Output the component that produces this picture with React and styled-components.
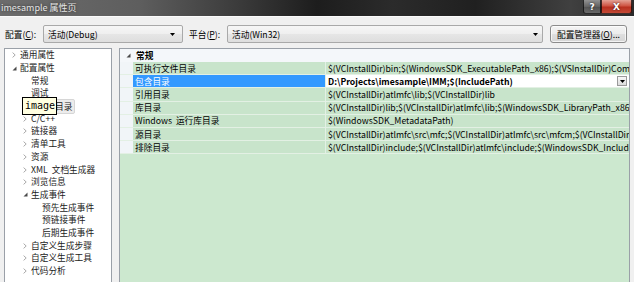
import React from 'react';
import styled, { createGlobalStyle } from 'styled-components';

const Global = createGlobalStyle`
  html, body { margin: 0; padding: 0; background: #f0f0f0; overflow: hidden; }
  #root { width: 634px; height: 282px; }
  * { box-sizing: border-box; }
`;

const UI = `"Noto Sans CJK SC", "Noto Sans", sans-serif`;

const Window = styled.div`
  position: relative;
  width: 634px;
  height: 282px;
  overflow: hidden;
  display: flex;
  flex-direction: column;
  background: #f0f0f0;
  font-family: ${UI};
  font-size: 8.7px;
  color: #000;
`;

const TitleBar = styled.div`
  height: 16px;
  flex: none;
  display: flex;
  align-items: flex-start;
  justify-content: space-between;
  background: linear-gradient(90deg, #6c6c6c 0%, #5e5e5e 22%, #3a3a3a 38%, #1d1d1d 50%, #2b2b2b 62%, #202020 75%, #404040 90%, #2a2a2a 100%);
`;

const TitleText = styled.div`
  padding-left: 1px;
  line-height: 15px;
  font-size: 9px;
  color: #e6e6e6;
  text-shadow: 0 0 3px rgba(0, 0, 0, 0.6);
`;

const CaptionButtons = styled.div`
  display: flex;
  margin-right: 2px;
`;

const CaptionButton = styled.div`
  width: ${(p) => p.$w}px;
  height: 14px;
  display: flex;
  align-items: center;
  justify-content: center;
  color: #fff;
  font-family: "DejaVu Sans", sans-serif;
  font-weight: bold;
  font-size: 9px;
  border: 1px solid rgba(0, 0, 0, 0.7);
  border-top: none;
  border-radius: ${(p) => (p.$close ? '0 0 3px 0' : '0 0 0 3px')};
  background: ${(p) =>
    p.$close
      ? 'linear-gradient(#e3a295 0%, #cf5544 45%, #b8301f 55%, #c44a36 100%)'
      : 'linear-gradient(rgba(255,255,255,0.45) 0%, rgba(255,255,255,0.22) 50%, rgba(255,255,255,0.12) 51%, rgba(255,255,255,0.25) 100%)'};
  text-shadow: 0 0 2px rgba(0, 0, 0, 0.8);
`;

const Body = styled.div`
  flex: 1;
  min-height: 0;
  display: flex;
  flex-direction: column;
  padding: 8px 4px 0 4px;
  border-top: 1px solid #fbfbfb;
`;

const TopRow = styled.div`
  height: 18px;
  flex: none;
  display: flex;
  align-items: center;
`;

const FieldLabel = styled.div`
  width: ${(p) => p.$w}px;
  margin-left: ${(p) => p.$ml || 0}px;
  white-space: nowrap;
`;

const Select = styled.div`
  width: ${(p) => p.$w}px;
  height: 18px;
  display: flex;
  align-items: center;
  padding: 0 ${(p) => p.$pr}px 0 4px;
  border: 1px solid #a9a9a9;
  border-radius: 2px;
  background: linear-gradient(#f6f6f6 0%, #efefef 50%, #e6e6e6 51%, #dedede 100%);
`;

const SelectText = styled.div`
  flex: 1;
  white-space: nowrap;
  overflow: hidden;
`;

const Caret = styled.svg`
  flex: none;
  width: 5px;
  height: 3px;
`;

const PushButton = styled.div`
  width: 77px;
  height: 18px;
  margin-left: 7px;
  display: flex;
  align-items: center;
  justify-content: center;
  white-space: nowrap;
  border: 1px solid #8c8c8c;
  border-radius: 3px;
  background: linear-gradient(#f4f4f4 0%, #ececec 50%, #dfdfdf 51%, #d5d5d5 100%);
  box-shadow: inset 0 0 0 1px rgba(255, 255, 255, 0.7);
`;

const Main = styled.div`
  flex: 1;
  min-height: 0;
  margin-top: 5px;
  display: flex;
  gap: 7px;
`;

const TreePanel = styled.div`
  width: 108px;
  flex: none;
  border: 1px solid #9aa0a8;
  border-bottom: none;
  background: #fff;
  overflow: hidden;
`;

const TreeRow = styled.div`
  height: 12.7px;
  display: flex;
  align-items: center;
  padding-left: ${(p) => 7 + p.$level * 11}px;
  white-space: nowrap;
  word-spacing: 2px;
  color: #1a1a1a;
`;

const ArrowSlot = styled.div`
  width: 8px;
  flex: none;
  display: flex;
  align-items: center;
`;

const TreeText = styled.span`
  line-height: 12px;
`;

const Selected = styled.span`
  margin-left: -3px;
  padding: 1px 2px;
  border: 1px solid #d6d6d6;
  border-radius: 2px;
  background: #ececec;
  line-height: 11px;
`;

const Tooltip = styled.div`
  position: absolute;
  left: 22px;
  top: 97px;
  width: 35px;
  height: 18px;
  border: 1px solid #000;
  background: #ffffe1;
  font-family: "DejaVu Sans Mono", monospace;
  font-size: 10px;
  line-height: 16px;
  padding-left: 2px;
  color: #000;
`;

const GridPanel = styled.div`
  flex: 1;
  min-width: 0;
  display: flex;
  flex-direction: column;
  border: 1px solid #9aa0a8;
  border-bottom: none;
  background: #cce8cf;
  overflow: hidden;
`;

const CategoryRow = styled.div`
  height: 13px;
  flex: none;
  display: flex;
  align-items: center;
  padding-left: 6px;
  background: #f4f7fa;
  font-weight: bold;
`;

const CategoryText = styled.span`
  margin-left: 5px;
`;

const PropRow = styled.div`
  height: 13.2px;
  flex: none;
  display: flex;
  border-bottom: 1px solid #e3f0e4;
`;

const Gutter = styled.div`
  width: 13px;
  flex: none;
  background: #f1f5f8;
`;

const NameCell = styled.div`
  width: 193px;
  flex: none;
  padding-left: 2px;
  display: flex;
  align-items: center;
  white-space: nowrap;
  word-spacing: 2px;
  border-right: 1px solid #e3f0e4;
  background: ${(p) => (p.$sel ? '#3399ff' : '#c8e4cb')};
  color: ${(p) => (p.$sel ? '#fff' : '#000')};
`;

const ValueCell = styled.div`
  flex: 1;
  min-width: 0;
  display: flex;
  align-items: center;
  padding-left: 2px;
  padding-right: ${(p) => (p.$sel ? 2 : 0)}px;
  background: ${(p) => (p.$sel ? '#fff' : '#c8e4cb')};
  font-weight: ${(p) => (p.$sel ? 'bold' : 'normal')};
`;

const ValueText = styled.div`
  flex: 1;
  min-width: 0;
  white-space: nowrap;
  overflow: hidden;
`;

const DropButton = styled.div`
  width: 10px;
  height: 10px;
  flex: none;
  display: flex;
  align-items: center;
  justify-content: center;
  border: 1px solid #9a9a9a;
  background: linear-gradient(#f8f8f8, #dcdcdc);
`;

const Chevron = () => (
  <svg width="4" height="6" viewBox="0 0 4 6">
    <polyline points="0.6,0.6 3.2,3 0.6,5.4" fill="none" stroke="#a9a9a9" strokeWidth="1" />
  </svg>
);

const Expanded = () => (
  <svg width="5" height="5" viewBox="0 0 5 5">
    <polygon points="4.5,0.5 4.5,4.5 0.5,4.5" fill="#4a4a4a" />
  </svg>
);

const CaretIcon = () => (
  <Caret viewBox="0 0 5 3">
    <polygon points="0,0 5,0 2.5,3" fill="#000" />
  </Caret>
);

const tree = [
  { t: '通用属性', l: 0, a: 'c' },
  { t: '配置属性', l: 0, a: 'e' },
  { t: '常规', l: 1 },
  { t: '调试', l: 1 },
  { t: 'VC++ 目录', l: 1, sel: true },
  { t: 'C/C++', l: 1, a: 'c' },
  { t: '链接器', l: 1, a: 'c' },
  { t: '清单工具', l: 1, a: 'c' },
  { t: '资源', l: 1, a: 'c' },
  { t: 'XML 文档生成器', l: 1, a: 'c' },
  { t: '浏览信息', l: 1, a: 'c' },
  { t: '生成事件', l: 1, a: 'e' },
  { t: '预先生成事件', l: 2 },
  { t: '预链接事件', l: 2 },
  { t: '后期生成事件', l: 2 },
  { t: '自定义生成步骤', l: 1, a: 'c' },
  { t: '自定义生成工具', l: 1, a: 'c' },
  { t: '代码分析', l: 1, a: 'c' },
];

const props = [
  { n: '可执行文件目录', v: '$(VCInstallDir)bin;$(WindowsSDK_ExecutablePath_x86);$(VSInstallDir)Common7\\Tools\\bin;$(VSInstallDir)Common7\\tools;$(VSInstallDir)Common7\\ide' },
  { n: '包含目录', v: 'D:\\Projects\\imesample\\IMM;$(IncludePath)', sel: true },
  { n: '引用目录', v: '$(VCInstallDir)atlmfc\\lib;$(VCInstallDir)lib' },
  { n: '库目录', v: '$(VCInstallDir)lib;$(VCInstallDir)atlmfc\\lib;$(WindowsSDK_LibraryPath_x86);' },
  { n: 'Windows 运行库目录', v: '$(WindowsSDK_MetadataPath)' },
  { n: '源目录', v: '$(VCInstallDir)atlmfc\\src\\mfc;$(VCInstallDir)atlmfc\\src\\mfcm;$(VCInstallDir)atlmfc\\src\\atl;$(VCInstallDir)crt\\src;' },
  { n: '排除目录', v: '$(VCInstallDir)include;$(VCInstallDir)atlmfc\\include;$(WindowsSDK_IncludePath);$(MSBuild_ExecutablePath);$(VC_LibraryPath_x86);' },
];

export default function App() {
  return (
    <>
      <Global />
      <Window>
        <TitleBar>
          <TitleText>imesample 属性页</TitleText>
          <CaptionButtons>
            <CaptionButton $w={18}>?</CaptionButton>
            <CaptionButton $w={31} $close>X</CaptionButton>
          </CaptionButtons>
        </TitleBar>
        <Body>
          <TopRow>
            <FieldLabel $w={38} $ml={1}>配置(<u>C</u>):</FieldLabel>
            <Select $w={140} $pr={7}>
              <SelectText>活动(Debug)</SelectText>
              <CaretIcon />
            </Select>
            <FieldLabel $w={38} $ml={6}>平台(<u>P</u>):</FieldLabel>
            <Select $w={316} $pr={4}>
              <SelectText>活动(Win32)</SelectText>
              <CaretIcon />
            </Select>
            <PushButton>配置管理器(<u>O</u>)...</PushButton>
          </TopRow>
          <Main>
            <TreePanel>
              {tree.map((it, i) => (
                <TreeRow key={i} $level={it.l}>
                  <ArrowSlot>{it.a === 'c' ? <Chevron /> : it.a === 'e' ? <Expanded /> : null}</ArrowSlot>
                  {it.sel ? <Selected>{it.t}</Selected> : <TreeText>{it.t}</TreeText>}
                </TreeRow>
              ))}
            </TreePanel>
            <GridPanel>
              <CategoryRow>
                <Expanded />
                <CategoryText>常规</CategoryText>
              </CategoryRow>
              {props.map((p, i) => (
                <PropRow key={i}>
                  <Gutter />
                  <NameCell $sel={p.sel}>{p.n}</NameCell>
                  <ValueCell $sel={p.sel}>
                    <ValueText>{p.v}</ValueText>
                    {p.sel && (
                      <DropButton>
                        <CaretIcon />
                      </DropButton>
                    )}
                  </ValueCell>
                </PropRow>
              ))}
            </GridPanel>
          </Main>
        </Body>
        <Tooltip>image</Tooltip>
      </Window>
    </>
  );
}
